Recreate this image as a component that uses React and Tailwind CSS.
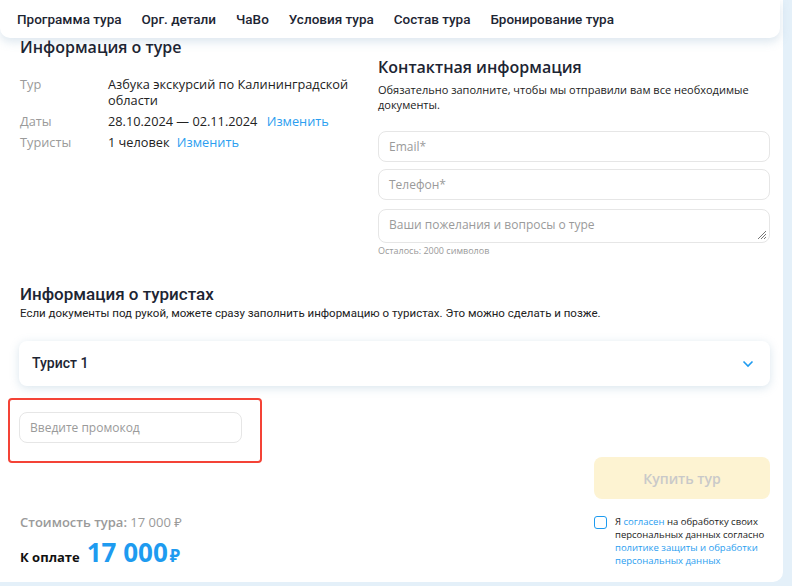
import React from "react";

const navItems = [
  "Программа тура",
  "Орг. детали",
  "ЧаВо",
  "Условия тура",
  "Состав тура",
  "Бронирование тура",
];

const open = { fontFamily: '"Open Sans", "Noto Sans", sans-serif' };
const roboto = { fontFamily: 'Roboto, "Noto Sans", sans-serif' };

const Input = ({ placeholder, className = "" }) => (
  <div
    className={`flex h-[31px] items-center rounded-[8px] border border-[#e6e6e6] bg-white px-[10px] text-[12px] text-[#9a9a9a] ${className}`}
  >
    {placeholder}
  </div>
);

const App = () => {
  return (
    <div className="h-[586px] w-[792px] overflow-hidden bg-[#e4f0f9]" style={open}>
      <div className="h-[582px] w-[783px] rounded-br-[10px] bg-white">
        {/* верхнее меню */}
        <nav
          className="flex h-[38px] w-[780px] items-center gap-[20px] rounded-b-[10px] bg-white pl-[17px] text-[13.5px] font-medium text-[#1d2533] shadow-[0_4px_10px_rgba(120,160,190,0.25)]"
          style={roboto}
        >
          {navItems.map((item) => (
            <span key={item}>{item}</span>
          ))}
        </nav>

        <div className="flex pl-[20px] pr-[13px]">
          {/* информация о туре */}
          <div className="w-[338px] shrink-0">
            <h2 className="text-[16px] font-semibold leading-[18px] text-[#1d2533]">
              Информация о туре
            </h2>
            <div className="mt-[20px] grid grid-cols-[88px_1fr] gap-y-[5px] text-[12.75px] leading-[16px] text-[#222]">
              <span className="text-[#9a9a9a]">Тур</span>
              <span>Азбука экскурсий по Калининградской области</span>
              <span className="text-[#9a9a9a]">Даты</span>
              <span>
                28.10.2024 — 02.11.2024{" "}
                <span className="ml-[6px] text-[#2b9ef0]">Изменить</span>
              </span>
              <span className="text-[#9a9a9a]">Туристы</span>
              <span>
                1 человек <span className="ml-[4px] text-[#2b9ef0]">Изменить</span>
              </span>
            </div>
          </div>

          {/* контактная информация */}
          <div className="ml-[20px] w-[392px] shrink-0 pt-[18px]">
            <h2 className="text-[16px] font-semibold leading-[22px] text-[#1d2533]">
              Контактная информация
            </h2>
            <p className="mt-[4px] text-[11px] leading-[15px] text-[#222]">
              Обязательно заполните, чтобы мы отправили вам все необходимые
              документы.
            </p>
            <Input placeholder="Email*" className="mt-[19px]" />
            <Input placeholder="Телефон*" className="mt-[7px]" />
            <div className="relative mt-[9px] h-[34px] rounded-[8px] border border-[#e6e6e6] px-[10px] pt-[7px] text-[12px] leading-[16px] text-[#9a9a9a]">
              Ваши пожелания и вопросы о туре
              <svg
                className="absolute bottom-[2px] right-[2px]"
                width="12"
                height="12"
                viewBox="0 0 12 12"
              >
                <path
                  d="M11 3 L3 11 M11 6 L6 11 M11 9 L9 11"
                  stroke="#777"
                  strokeWidth="1"
                />
              </svg>
            </div>
            <p className="mt-[2px] text-[9px] leading-[12px] text-[#999]">
              Осталось: 2000 символов
            </p>
          </div>
        </div>

        {/* информация о туристах */}
        <div className="mt-[26px] px-[20px]" style={roboto}>
          <h2 className="text-[17px] font-medium leading-[22px] text-[#1d2533]">
            Информация о туристах
          </h2>
          <p className="mt-[1px] text-[11.5px] leading-[15px] text-[#222]">
            Если документы под рукой, можете сразу заполнить информацию о
            туристах. Это можно сделать и позже.
          </p>
          <div className="ml-[-1px] mt-[20px] flex h-[45px] w-[751px] items-center justify-between rounded-[8px] bg-white pl-[13px] pr-[16px] shadow-[0_2px_10px_rgba(120,160,190,0.28)]">
            <span className="text-[14px] font-medium text-[#1d2533]">Турист 1</span>
            <svg width="12" height="8" viewBox="0 0 12 8">
              <path d="M1.5 1.5 L6 6 L10.5 1.5" fill="none" stroke="#1e9bf0" strokeWidth="1.6" />
            </svg>
          </div>
        </div>

        {/* промокод и оплата */}
        <div className="flex pl-[8px] pr-[13px]">
          <div className="flex-1">
            <div className="mt-[12px] h-[65px] w-[254px] rounded-[4px] border-2 border-[#f44336] pl-[9px] pt-[12px]">
              <Input placeholder="Введите промокод" className="w-[223px]" />
            </div>
            <div className="mt-[50px] pl-[12px] text-[13px] text-[#9a9a9a]">
              <span className="font-semibold">Стоимость тура:</span> 17 000 ₽
            </div>
            <div className="mt-[5px] flex items-baseline pl-[12px]">
              <span className="text-[13px] font-bold text-[#111]">К оплате</span>
              <span className="ml-[7px] text-[26px] font-bold leading-[28px] text-[#1e9bf0]">
                17 000
              </span>
              <span className="ml-[2px] text-[17px] font-bold text-[#1e9bf0]">₽</span>
            </div>
          </div>
          <div className="w-[176px] pt-[71px]">
            <div className="flex h-[42px] items-center justify-center rounded-[8px] bg-[#fdf3d2] text-[14px] font-semibold text-[#c9c9c9]">
              Купить тур
            </div>
            <div className="mt-[16px] flex gap-[8px]">
              <div className="mt-[1px] h-[13px] w-[13px] shrink-0 rounded-[3px] border-[1.5px] border-[#1e9bf0]" />
              <p className="text-[9.5px] leading-[13px] text-[#222]">
                Я <span className="text-[#2b9ef0]">согласен</span> на обработку своих
                персональных данных согласно{" "}
                <span className="text-[#2b9ef0]">
                  политике защиты и обработки персональных данных
                </span>
              </p>
            </div>
          </div>
        </div>
      </div>
    </div>
  );
};

export default App;
